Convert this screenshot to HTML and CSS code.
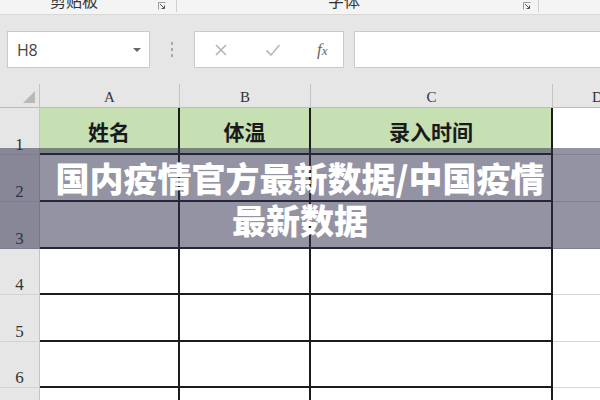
FILE: index.html
```html
<!DOCTYPE html>
<html lang="zh-CN">
<head>
<meta charset="utf-8">
<title>国内疫情官方最新数据</title>
<link rel="stylesheet" href="styles.css">
</head>
<body>
<div class="page">
  <div class="ribbon">
    <span class="rlabel clip-label">剪贴板</span>
    <span class="launcher l1"><svg width="8" height="8" viewBox="0 0 8 8"><path d="M0.5 0.5 V7.5 M0.5 0.5 H7.5" stroke="#9a9a9a" fill="none"/><path d="M2 2 L6.5 6.5 M3.5 6.5 H6.5 V3.5" stroke="#555" fill="none"/></svg></span>
    <span class="rsep s1"></span>
    <span class="rlabel font-label">字体</span>
    <span class="launcher l2"><svg width="8" height="8" viewBox="0 0 8 8"><path d="M0.5 0.5 V7.5 M0.5 0.5 H7.5" stroke="#9a9a9a" fill="none"/><path d="M2 2 L6.5 6.5 M3.5 6.5 H6.5 V3.5" stroke="#555" fill="none"/></svg></span>
    <span class="rsep s2"></span>
  </div>
  <div class="toolbar">
    <div class="namebox">
      <span class="nb-text">H8</span>
      <span class="nb-arrow"></span>
    </div>
    <div class="dots"><i></i><i></i><i></i></div>
    <div class="fbtns">
      <svg class="ico-x" width="14" height="14" viewBox="0 0 14 14"><path d="M2 2 L12 12 M12 2 L2 12" stroke="#b4b4b4" stroke-width="1.6"/></svg>
      <svg class="ico-v" width="16" height="14" viewBox="0 0 16 14"><path d="M1.5 7.5 L6 12 L14.5 2" stroke="#bdbdbd" stroke-width="1.8" fill="none"/></svg>
      <span class="fx">f<span class="fx-x">x</span></span>
    </div>
    <div class="finput"></div>
  </div>
  <div class="sheet">
    <div class="corner"><span class="tri"></span></div>
    <div class="ch">A</div>
    <div class="ch">B</div>
    <div class="ch">C</div>
    <div class="ch">D</div>

    <div class="rh">1</div>
    <div class="c hd">姓名</div>
    <div class="c hd">体温</div>
    <div class="c hd">录入时间</div>
    <div class="d"></div>

    <div class="rh">2</div>
    <div class="c"></div><div class="c"></div><div class="c"></div><div class="d"></div>
    <div class="rh">3</div>
    <div class="c"></div><div class="c"></div><div class="c"></div><div class="d"></div>
    <div class="rh">4</div>
    <div class="c"></div><div class="c"></div><div class="c"></div><div class="d"></div>
    <div class="rh">5</div>
    <div class="c"></div><div class="c"></div><div class="c"></div><div class="d"></div>
    <div class="rh">6</div>
    <div class="c"></div><div class="c"></div><div class="c"></div><div class="d"></div>
    <div class="rh">7</div>
    <div class="c"></div><div class="c"></div><div class="c"></div><div class="d"></div>
  </div>
  <div class="banner">
    <h1 class="title">国内疫情官方最新数据/中国疫情<br>最新数据</h1>
  </div>
</div>
</body>
</html>
```
FILE: styles.css
```css
html, body {
  margin: 0;
  padding: 0;
  width: 600px;
  height: 400px;
  overflow: hidden;
  background: #ffffff;
}
.page {
  position: relative;
  width: 600px;
  height: 400px;
  overflow: hidden;
  font-family: "Noto Sans CJK SC", "Noto Sans", sans-serif;
}
.ribbon {
  position: relative;
  height: 14px;
  background: #f4f4f4;
  border-bottom: 1px solid #d8d8d8;
  overflow: hidden;
}
.rlabel {
  position: absolute;
  top: -8px;
  font-size: 16px;
  line-height: 16px;
  color: #333;
}
.clip-label { left: 50px; }
.font-label { left: 328px; }
.launcher {
  position: absolute;
  top: 2px;
  width: 8px;
  height: 8px;
}
.launcher svg { display: block; }
.l1 { left: 158px; }
.l2 { left: 523px; }
.rsep {
  position: absolute;
  top: 0;
  width: 1px;
  height: 12px;
  background: #cfcfcf;
}
.s1 { left: 176px; }
.s2 { left: 538px; }

.toolbar {
  height: 69px;
  background: #e6e6e6;
  display: flex;
  align-items: flex-start;
  padding-top: 16px;
  box-sizing: border-box;
}
.namebox {
  margin-left: 7px;
  width: 143px;
  height: 37px;
  background: #fff;
  border: 1px solid #cacaca;
  box-sizing: border-box;
  display: flex;
  align-items: center;
  justify-content: space-between;
  padding: 0 8px 0 9px;
}
.nb-text {
  font-family: "Open Sans", "Liberation Sans", sans-serif;
  font-size: 16px;
  color: #444;
  letter-spacing: -0.3px;
}
.nb-arrow {
  width: 0;
  height: 0;
  border-left: 4px solid transparent;
  border-right: 4px solid transparent;
  border-top: 4px solid #666;
}
.dots {
  width: 44px;
  height: 37px;
  display: flex;
  flex-direction: column;
  align-items: center;
  justify-content: center;
  gap: 3px;
}
.dots i {
  display: block;
  width: 2px;
  height: 3px;
  background: #a8a8a8;
}
.fbtns {
  width: 150px;
  height: 37px;
  background: #fff;
  border: 1px solid #cacaca;
  box-sizing: border-box;
  display: flex;
  align-items: center;
  padding-left: 19px;
}
.ico-x { display: block; margin-right: 37px; }
.ico-v { display: block; margin-right: 36px; }
.fx {
  font-family: "Liberation Serif", "DejaVu Serif", serif;
  font-style: italic;
  font-size: 17px;
  color: #666;
}
.fx-x { font-size: 13px; }
.finput {
  margin-left: 10px;
  flex: 1;
  height: 37px;
  background: #fff;
  border: 1px solid #cacaca;
  border-right: none;
  box-sizing: border-box;
}

.sheet {
  display: grid;
  grid-template-columns: 40px 140px 131px 242px 90px;
  grid-template-rows: 24px 47px 47px 47px 46px 47px 46px 40px;
  background: #fff;
}
.corner {
  background: #e6e6e6;
  border-right: 1px solid #c4c4c4;
  border-bottom: 1px solid #bcbcbc;
  box-sizing: border-box;
  position: relative;
}
.tri {
  position: absolute;
  right: 4px;
  bottom: 4px;
  width: 0;
  height: 0;
  border-left: 12px solid transparent;
  border-bottom: 12px solid #b9b9b9;
}
.ch {
  background: #e6e6e6;
  border-right: 1px solid #c4c4c4;
  border-bottom: 1px solid #bcbcbc;
  box-sizing: border-box;
  display: flex;
  align-items: flex-end;
  justify-content: center;
  font-family: "Liberation Serif", "DejaVu Serif", serif;
  font-size: 15px;
  line-height: 18px;
  color: #333;
  padding-bottom: 1px;
}
.rh {
  background: #e6e6e6;
  border-right: 1px solid #c4c4c4;
  border-bottom: 1px solid #d2d2d2;
  box-sizing: border-box;
  display: flex;
  align-items: flex-end;
  justify-content: center;
  font-family: "Liberation Serif", "DejaVu Serif", serif;
  font-size: 17px;
  line-height: 17px;
  color: #333;
  padding-bottom: 1px;
}
.c {
  border-right: 2px solid #1c1c1c;
  border-bottom: 2px solid #1c1c1c;
  box-sizing: border-box;
  background: #fff;
}
.c.hd {
  background: #c6e0b4;
  display: flex;
  align-items: center;
  justify-content: center;
  font-family: "Noto Sans CJK SC", sans-serif;
  font-weight: 700;
  font-size: 21px;
  color: #1a1a1a;
  padding-top: 1px;
}
.d {
  border-right: 1px solid #d6d6d6;
  border-bottom: 1px solid #d6d6d6;
  box-sizing: border-box;
  background: #fff;
}

.banner {
  position: absolute;
  left: 0;
  top: 148px;
  width: 600px;
  height: 101px;
  background: rgba(48, 48, 80, 0.52);
  box-sizing: border-box;
  padding-top: 9px;
}
.title {
  margin: 0;
  text-align: center;
  color: #ffffff;
  font-family: "Noto Sans CJK SC", sans-serif;
  font-weight: 900;
  font-size: 34px;
  line-height: 42px;
  letter-spacing: 0;
}
```
